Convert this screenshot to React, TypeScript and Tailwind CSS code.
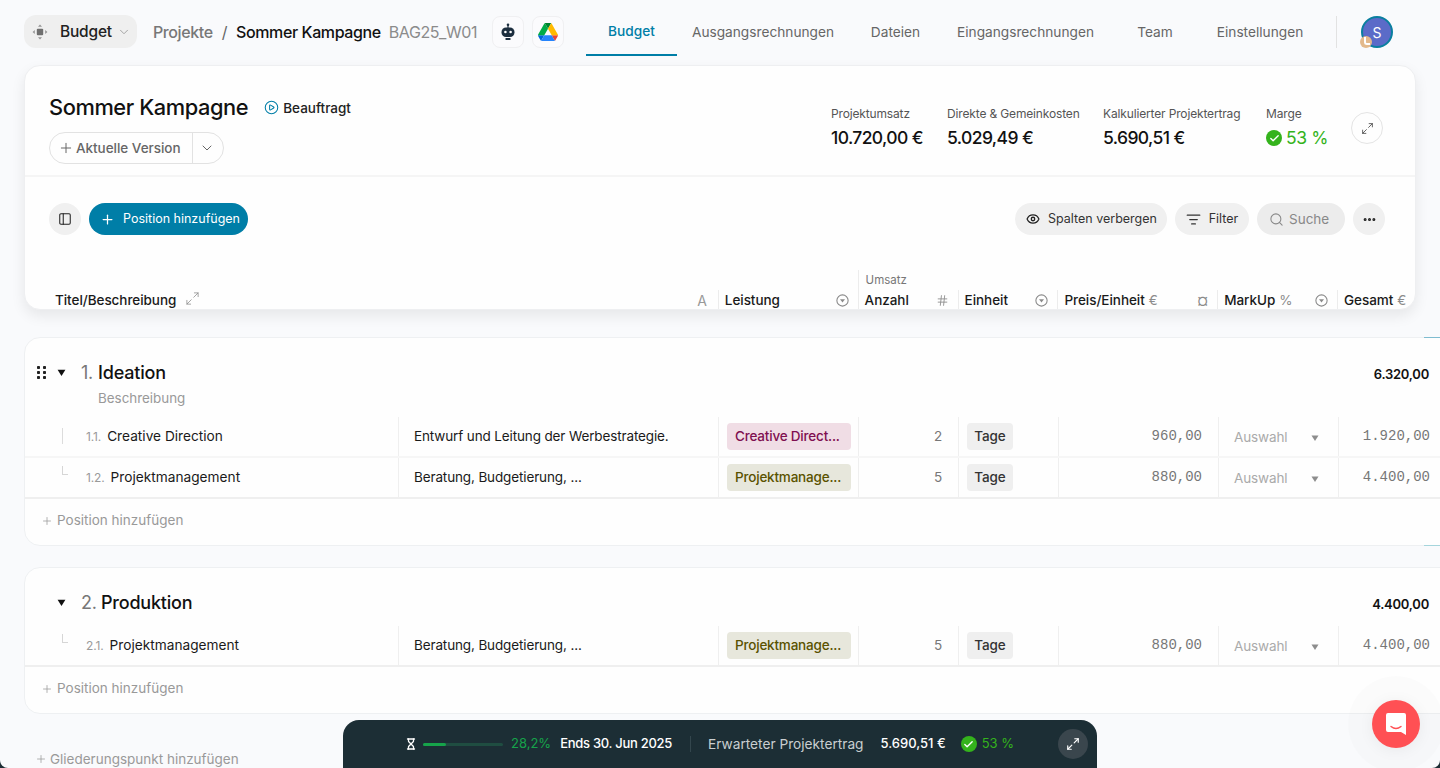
import { Check, ChevronDown, CirclePlay, Ellipsis, Eye, Hash, Hourglass, ListFilter, Maximize2, PanelLeft, Plus, Search } from 'lucide-react';

const rowGrid = 'grid grid-cols-[373px_320px_140px_100px_100px_160px_120px_102px]';
const mono = "font-['Liberation_Mono',monospace]";

const CircleCaret = () => (
  <svg width="13" height="13" viewBox="0 0 12 12" className="shrink-0">
    <circle cx="6" cy="6" r="5.2" fill="none" stroke="#8a8a8a" strokeWidth="1" />
    <path d="M3.7 4.8h4.6L6 7.8z" fill="#8a8a8a" />
  </svg>
);

const Caret = ({ color = '#111', size = 8 }: { color?: string; size?: number }) => (
  <svg width={size} height={size} viewBox="0 0 8 8" className="shrink-0">
    <path d="M0.5 1.5h7L4 7z" fill={color} />
  </svg>
);

const Grip = () => (
  <svg width="9" height="13" viewBox="0 0 9 13" fill="#222" className="shrink-0">
    <rect x="0" y="0" width="3" height="3" rx=".8" />
    <rect x="6" y="0" width="3" height="3" rx=".8" />
    <rect x="0" y="5" width="3" height="3" rx=".8" />
    <rect x="6" y="5" width="3" height="3" rx=".8" />
    <rect x="0" y="10" width="3" height="3" rx=".8" />
    <rect x="6" y="10" width="3" height="3" rx=".8" />
  </svg>
);

const GoodBadge = ({ size }: { size: string }) => (
  <span className={`${size} flex items-center justify-center rounded-full bg-[#34b31c] text-white`}>
    <Check size={11} strokeWidth={3} />
  </span>
);

const Stat = ({ label, value, width }: { label: string; value: string; width: string }) => (
  <div className={width}>
    <div className="text-[12px] leading-4 tracking-[-0.15px] text-[#555]">{label}</div>
    <div className="mt-[4px] text-[17.5px] leading-6 font-medium tracking-[-0.6px] text-[#111]">{value}</div>
  </div>
);

const HeadCell = ({ label, unit, icon, width }: { label: string; unit?: string; icon?: React.ReactNode; width: string }) => (
  <div className={`${width} flex h-[21px] items-center justify-between border-l border-[#ececec] pr-[9px] pl-[6px]`}>
    <span className="text-[13.5px] font-medium tracking-[-0.05px] text-[#1a1a1a]">
      {label}
      {unit && <span className="ml-1 font-normal text-[#8c8c8c]">{unit}</span>}
    </span>
    {icon}
  </div>
);

const Row = ({ num, name, desc, chip, chipClass, qty, price, total, line, last }: {
  num: string; name: string; desc: string; chip: string; chipClass: string; qty: string; price: string; total: string; line: 'bar' | 'corner'; last?: boolean;
}) => (
  <div className={`${rowGrid} h-[41px] border-b-2 ${last ? 'border-[#efefef]' : 'border-[#f6f6f6]'} text-[13.5px] tracking-[-0.13px]`}>
    <div className="flex items-center pl-[37px]">
      {line === 'bar'
        ? <span className="mb-[2px] h-[16px] w-px bg-[#dcdcdc]" />
        : <span className="mb-[14px] h-[9px] w-[6px] border-b border-l border-[#d6d6d6]" />}
      <span className={`text-[12px] text-[#9a9a9a] ${line === 'bar' ? 'ml-[23px]' : 'ml-[18px]'}`}>{num}</span>
      <span className="ml-[6px] text-[13.7px] tracking-normal text-[#1a1a1a]">{name}</span>
    </div>
    <div className="flex items-center border-l border-[#efefef] pl-[15px] text-[#1a1a1a]">{desc}</div>
    <div className="flex items-center border-l border-[#efefef] pl-2">
      <span className={`flex h-[27px] w-[124px] items-center rounded-[4px] px-2 text-[13.5px] font-medium tracking-[-0.2px] whitespace-nowrap ${chipClass}`}>{chip}</span>
    </div>
    <div className="flex items-center justify-end border-l border-[#efefef] pr-[16px] text-[#777]">{qty}</div>
    <div className="flex items-center border-l border-[#efefef] pl-2">
      <span className="flex h-[27px] w-[46px] items-center justify-center rounded-[4px] bg-[#efefef] font-medium text-[#333]">Tage</span>
    </div>
    <div className={`flex items-center justify-end border-l border-[#efefef] pr-[16px] text-[14px] tracking-normal text-[#777] ${mono}`}>{price}</div>
    <div className="flex items-center justify-between border-l border-[#efefef] pr-[19px] pl-[15px] text-[#aaa]">
      <span className="mt-[2px]">Auswahl</span>
      <span className="mt-[3px]"><Caret color="#8d8d8d" /></span>
    </div>
    <div className={`flex items-center justify-end border-l border-[#efefef] pr-[10px] text-[14px] tracking-normal text-[#777] ${mono}`}>{total}</div>
  </div>
);

const AddPosition = () => (
  <div className="flex h-[46px] items-center gap-1 pb-[3px] pl-[16px] text-[13.5px] text-[#999]">
    <Plus size={12} strokeWidth={1.5} />
    Position hinzufügen
  </div>
);

export default function App() {
  return (
    <div className="h-[768px] w-[1440px] overflow-hidden bg-[#1c2e35] font-['Inter',sans-serif]">
      <div className="relative h-[768px] overflow-hidden rounded-b-[8px] bg-[#f9fafc]">
        {/* Top bar */}
        <header className="flex h-[65px] items-start pr-[47px] pl-[24px]">
          <div className="mt-[15px] flex h-[33px] w-[113px] shrink-0 items-center rounded-[12px] bg-[#efefef] pl-[8px]">
            <svg width="16" height="16" viewBox="0 0 16 16" fill="#6f6f6f" className="shrink-0">
              <rect x="4.8" y="4.8" width="6.4" height="6.4" rx="1" />
              <path d="M8 .6l2 2.2H6zM8 15.4l2-2.2H6zM.6 8l2.2-2v4zM15.4 8l-2.2-2v4z" opacity=".7" />
            </svg>
            <span className="ml-[12px] text-[15.5px] font-medium tracking-[-0.2px] text-[#222]">Budget</span>
            <ChevronDown size={14} strokeWidth={1.5} className="ml-[5px] shrink-0 text-[#999]" />
          </div>
          <div className="mt-[16px] ml-[16px] flex h-[32px] items-center text-[16px] tracking-[-0.4px] whitespace-nowrap">
            <span className="font-medium text-[#777]">Projekte</span>
            <span className="mx-[9px] text-[#666]">/</span>
            <span className="font-medium text-[#111]">Sommer Kampagne</span>
            <span className="ml-[8px] text-[16px] text-[#8b8b8b]">BAG25_W01</span>
            <div className="ml-[15px] flex h-[32px] w-[32px] items-center justify-center rounded-[8px] border border-[#f0f0f2] bg-[#fbfbfd]">
              <svg width="16" height="18" viewBox="0 0 16 18">
                <circle cx="8" cy="1.8" r="1.3" fill="#1c2e3f" />
                <rect x="7.4" y="2" width="1.2" height="3" fill="#1c2e3f" />
                <rect x="1.5" y="4.5" width="13" height="9.5" rx="4.5" fill="#1c2e3f" />
                <circle cx="5.4" cy="9" r="1.3" fill="#fff" />
                <circle cx="10.6" cy="9" r="1.3" fill="#fff" />
                <rect x="5.5" y="15" width="5" height="2" rx=".6" fill="#1c2e3f" />
              </svg>
            </div>
            <div className="ml-[8px] flex h-[32px] w-[32px] items-center justify-center rounded-[8px] border border-[#f0f0f2] bg-[#fbfbfd]">
              <svg width="20" height="18" viewBox="0 0 87.3 78">
                <path d="M6.6 66.85l3.85 6.65c.8 1.4 1.95 2.5 3.3 3.3L27.5 53H0c0 1.55.4 3.1 1.2 4.5z" fill="#0066da" />
                <path d="M43.65 25L29.9 1.2c-1.35.8-2.5 1.9-3.3 3.3L1.2 48.5C.4 49.9 0 51.45 0 53h27.5z" fill="#00ac47" />
                <path d="M73.55 76.8c1.35-.8 2.5-1.9 3.3-3.3l1.6-2.75L86.1 57.5c.8-1.4 1.2-2.95 1.2-4.5H59.8l5.85 11.5z" fill="#ea4335" />
                <path d="M43.65 25L57.4 1.2C56.05.4 54.5 0 52.9 0H34.4c-1.6 0-3.15.45-4.5 1.2z" fill="#00832d" />
                <path d="M59.8 53H27.5L13.75 76.8c1.35.8 2.9 1.2 4.5 1.2h50.8c1.6 0 3.15-.45 4.5-1.2z" fill="#2684fc" />
                <path d="M73.4 26.5L60.7 4.5c-.8-1.4-1.95-2.5-3.3-3.3L43.65 25 59.8 53h27.45c0-1.55-.4-3.1-1.2-4.5z" fill="#ffba00" />
              </svg>
            </div>
          </div>
          <nav className="ml-auto flex h-[56px] text-[13.7px] text-[#666]">
            <div className="flex w-[91px] items-center justify-center border-b-2 border-[#007ea7] pt-[8px] font-medium text-[#007ea7]">Budget</div>
            <div className="flex w-[172px] items-center justify-center pt-[8px]">Ausgangsrechnungen</div>
            <div className="flex w-[93px] items-center justify-center pt-[8px]">Dateien</div>
            <div className="flex w-[167px] items-center justify-center pt-[8px]">Eingangsrechnungen</div>
            <div className="flex w-[92px] items-center justify-center pt-[8px]">Team</div>
            <div className="flex w-[118px] items-center justify-center pt-[8px]">Einstellungen</div>
          </nav>
          <div className="mt-[16px] ml-[17px] h-[32px] w-px bg-[#e2e2e2]" />
          <div className="relative mt-[16px] ml-[24px] flex h-[32px] w-[32px] items-center justify-center rounded-full border-2 border-[#0a7f9f] bg-[#5b6bc8] text-[14px] text-white">
            S
            <span className="absolute -bottom-[2px] -left-[3px] h-[12px] w-[12px] rounded-full bg-[#e3b98c]">
              <span className="absolute top-[1px] left-[4px] h-[8px] w-[6px] rounded-bl-[3px] border-b-2 border-l-2 border-white" />
            </span>
          </div>
        </header>

        {/* Project card */}
        <section className="mx-[24px] h-[245px] overflow-hidden rounded-[16px] border border-[#eeeff1] bg-[#fefefe] shadow-[0_6px_14px_rgba(0,0,0,0.08)]">
          <div className="flex h-[111px] items-start justify-between border-b-2 border-[#f5f5f5] pr-[32px] pl-[24px]">
            <div>
              <div className="mt-[26px] flex items-center">
                <h1 className="text-[21.8px] leading-[30px] font-medium tracking-[-0.4px] text-[#111]">Sommer Kampagne</h1>
                <CirclePlay size={15} strokeWidth={1.7} className="mt-[1px] ml-[16px] text-[#007ea7]" />
                <span className="mt-[2px] ml-[4px] text-[13.5px] font-medium text-[#222]">Beauftragt</span>
              </div>
              <div className="mt-[10px] flex h-[32px] w-[175px] items-center rounded-full border border-[#e2e2e2] text-[#666]">
                <div className="flex h-full w-[143px] items-center border-r border-[#e2e2e2] pl-[8px] text-[13.5px] font-medium tracking-[-0.03px] whitespace-nowrap">
                  <Plus size={16} strokeWidth={1.5} className="mr-[2px]" />
                  Aktuelle Version
                </div>
                <ChevronDown size={16} strokeWidth={1.5} className="ml-[6px]" />
              </div>
            </div>
            <div className="flex items-start pt-[40px]">
              <Stat label="Projektumsatz" value="10.720,00 €" width="w-[116px]" />
              <Stat label="Direkte & Gemeinkosten" value="5.029,49 €" width="w-[156px]" />
              <Stat label="Kalkulierter Projektertrag" value="5.690,51 €" width="w-[163px]" />
              <div className="w-[85px]">
                <div className="text-[12px] leading-4 tracking-[-0.15px] text-[#555]">Marge</div>
                <div className="mt-[4px] flex h-6 items-center gap-[4px] text-[17.5px] tracking-[-0.4px] text-[#34b31c]">
                  <GoodBadge size="h-[16px] w-[16px]" />
                  53 %
                </div>
              </div>
              <div className="mt-[6px] flex h-[32px] w-[32px] items-center justify-center rounded-full border border-[#e4e4e4] text-[#444]">
                <Maximize2 size={13} strokeWidth={1.5} />
              </div>
            </div>
          </div>

          <div className="flex items-center justify-between pt-[26px] pr-[30px] pl-[24px]">
            <div className="flex gap-[8px]">
              <div className="flex h-[32px] w-[32px] items-center justify-center rounded-full bg-[#f0f0f0] text-[#222]">
                <PanelLeft size={14} strokeWidth={1.8} />
              </div>
              <div className="flex h-[32px] w-[159px] items-center rounded-full bg-[#007ea7] pl-[11px] text-[12.5px] text-white">
                <Plus size={15} strokeWidth={2} />
                <span className="ml-[8px] pt-px">Position hinzufügen</span>
              </div>
            </div>
            <div className="flex gap-[8px] text-[12.5px] text-[#333]">
              <div className="flex h-[32px] w-[152px] items-center justify-center gap-[8px] rounded-full bg-[#f0f0f0] pl-px">
                <Eye size={14} strokeWidth={2.2} className="text-[#222]" />
                <span className="pt-px">Spalten verbergen</span>
              </div>
              <div className="flex h-[32px] w-[74px] items-center justify-center gap-[8px] rounded-full bg-[#f0f0f0]">
                <ListFilter size={15} strokeWidth={2} />
                <span className="pt-px">Filter</span>
              </div>
              <div className="flex h-[32px] w-[88px] items-center gap-[5px] rounded-full bg-[#ececec] pl-[12px] text-[13.5px] text-[#888]">
                <Search size={15} strokeWidth={1.7} />
                <span className="pt-px">Suche</span>
              </div>
              <div className="flex h-[32px] w-[32px] items-center justify-center rounded-full bg-[#f0f0f0] text-[#222]">
                <Ellipsis size={15} strokeWidth={2.8} />
              </div>
            </div>
          </div>

          <div className="mt-[34px] flex h-[42px] items-end">
            <div className="flex h-[21px] w-[694px] items-center justify-between pr-[11px] pl-[30px]">
              <span className="flex items-center gap-[9px] text-[13.5px] font-medium tracking-[-0.05px] text-[#1a1a1a]">
                Titel/Beschreibung
                <Maximize2 size={15} strokeWidth={1.2} className="mb-[4px] text-[#888]" />
              </span>
              <span className="text-[14px] text-[#999]">A</span>
            </div>
            <HeadCell label="Leistung" width="w-[140px]" icon={<CircleCaret />} />
            <div className="relative w-[100px]">
              <span className="absolute -top-[18px] left-[8px] text-[11.5px] leading-4 text-[#777]">Umsatz</span>
              <span className="absolute -top-[20px] left-0 h-[20px] w-px bg-[#ececec]" />
              <HeadCell label="Anzahl" width="w-[100px]" icon={<Hash size={13} strokeWidth={1.6} className="text-[#8a8a8a]" />} />
            </div>
            <HeadCell label="Einheit" width="w-[100px]" icon={<CircleCaret />} />
            <HeadCell label="Preis/Einheit" unit="€" width="w-[160px]" icon={<span className="text-[15px] leading-none text-[#8a8a8a]">¤</span>} />
            <HeadCell label="MarkUp" unit="%" width="w-[120px]" icon={<CircleCaret />} />
            <HeadCell label="Gesamt" unit="€" width="w-[78px]" />
          </div>
        </section>

        {/* Ideation */}
        <section className="relative mt-[27px] ml-[24px] h-[209px] w-[1440px] rounded-l-[16px] border border-[#eef0f2] bg-[#fefefe]">
          <div className="flex h-[79px] items-start justify-between pr-[34px]">
            <div className="flex items-start">
              <span className="mt-[28px] ml-[12px]"><Grip /></span>
              <span className="mt-[30px] ml-[11px]"><Caret size={9} /></span>
              <div className="mt-[22px] ml-[15px]">
                <div className="flex items-baseline text-[18px] leading-[26px] font-medium tracking-[-0.2px]">
                  <span className="w-[17px] font-normal text-[#777]">1.</span>
                  <span className="text-[#111]">Ideation</span>
                </div>
                <div className="mt-[2px] ml-[17px] text-[13.4px] leading-5 text-[#999]">Beschreibung</div>
              </div>
            </div>
            <div className="mt-[27px] text-[13px] font-semibold tracking-[-0.25px] text-[#111]">6.320,00</div>
          </div>
          <Row num="1.1." name="Creative Direction" desc="Entwurf und Leitung der Werbestrategie." chip="Creative Direct..." chipClass="bg-[#f0dde5] text-[#7f0f50]" qty="2" price="960,00" total="1.920,00" line="bar" />
          <Row num="1.2." name="Projektmanagement" desc="Beratung, Budgetierung, ..." chip="Projektmanage..." chipClass="bg-[#e7e7dc] text-[#5a5200]" qty="5" price="880,00" total="4.400,00" line="corner" last />
          <AddPosition />
        </section>

        {/* Produktion */}
        <section className="mt-[21px] ml-[24px] h-[147px] w-[1440px] rounded-l-[16px] border border-[#eef0f2] bg-[#fefefe]">
          <div className="flex h-[58px] items-start justify-between pr-[34px]">
            <div className="flex items-start">
              <span className="mt-[30px] ml-[32px]"><Caret size={9} /></span>
              <div className="mt-[22px] ml-[15px] flex items-baseline text-[18px] leading-[26px] font-medium tracking-[-0.2px]">
                <span className="w-[20px] font-normal text-[#777]">2.</span>
                <span className="text-[#111]">Produktion</span>
              </div>
            </div>
            <div className="mt-[27px] text-[13px] font-semibold tracking-[-0.25px] text-[#111]">4.400,00</div>
          </div>
          <Row num="2.1." name="Projektmanagement" desc="Beratung, Budgetierung, ..." chip="Projektmanage..." chipClass="bg-[#e7e7dc] text-[#5a5200]" qty="5" price="880,00" total="4.400,00" line="corner" last />
          <AddPosition />
        </section>

        <div className="mt-[37px] ml-[35px] flex items-center gap-[3px] text-[13.5px] leading-4 text-[#999]">
          <Plus size={12} strokeWidth={1.5} />
          Gliederungspunkt hinzufügen
        </div>

        {/* Teal ticks at the right edge */}
        <span className="absolute top-[337px] right-0 h-px w-[16px] bg-[#7fbcd0]" />
        <span className="absolute top-[545px] right-0 h-px w-[16px] bg-[#a5d5dc]" />

        {/* Floating summary */}
        <div className="absolute bottom-0 left-[343px] flex h-[48px] w-[754px] items-center rounded-t-[16px] bg-[#1c2e35] pr-[9px] pl-[62px] text-[13px] whitespace-nowrap">
          <Hourglass size={12} strokeWidth={2.6} className="text-white" />
          <div className="ml-[6px] h-[3px] w-[80px] rounded-full bg-[#1f4d41]">
            <div className="h-[3px] w-[23px] rounded-full bg-[#16a34a]" />
          </div>
          <span className="ml-[8px] text-[#16a34a]">28,2%</span>
          <span className="ml-[9px] font-medium tracking-[-0.28px] text-white">Ends 30. Jun 2025</span>
          <span className="ml-[18px] h-[16px] w-px bg-[#33464d]" />
          <span className="ml-[17px] text-[13.7px] text-[#c9ced0]">Erwarteter Projektertrag</span>
          <span className="ml-[17px] font-medium text-white">5.690,51 €</span>
          <span className="ml-[15px]"><GoodBadge size="h-[16px] w-[16px]" /></span>
          <span className="ml-[5px] text-[#34b31c]">53 %</span>
          <div className="ml-auto flex h-[30px] w-[30px] items-center justify-center rounded-full bg-[#3a464d] text-white">
            <Maximize2 size={14} strokeWidth={2} />
          </div>
        </div>

        {/* Chat launcher */}
        <div className="absolute right-[20px] bottom-[20px] flex h-[48px] w-[48px] items-center justify-center rounded-full bg-[#ff5054] shadow-[0_0_0_24px_rgba(0,0,0,0.012),0_2px_16px_rgba(0,0,0,0.06)]">
          <svg width="22" height="24" viewBox="0 0 22 24">
            <path d="M3 1h16a2 2 0 0 1 2 2v20l-5-3H3a2 2 0 0 1-2-2V3a2 2 0 0 1 2-2z" fill="#fff" />
            <path d="M6 14.5c3 2.4 7 2.4 10 0" fill="none" stroke="#ff5054" strokeWidth="1.4" strokeLinecap="round" />
          </svg>
        </div>
      </div>
    </div>
  );
}
